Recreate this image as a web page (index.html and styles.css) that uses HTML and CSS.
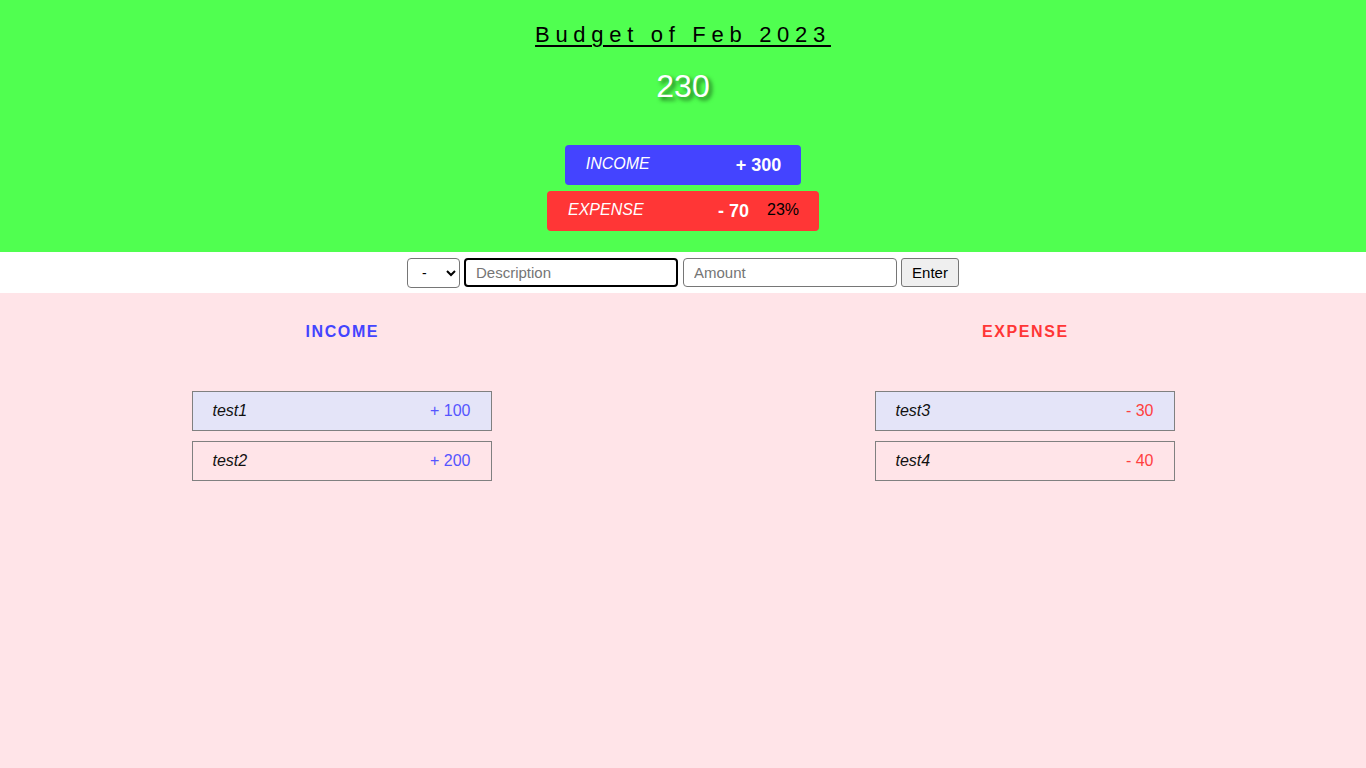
FILE: index.html
```html
<!DOCTYPE html>
<html>
<head>
<meta charset="utf-8">
<title>Budget</title>
<link rel="stylesheet" href="styles.css">
</head>
<body>
<header class="top">
  <h1 class="title">Budget of Feb 2023</h1>
  <div class="total">230</div>
  <div class="summary">
    <div class="sum sum-income">
      <span class="sum-label">INCOME</span>
      <span class="sum-value">+ 300</span>
    </div>
    <div class="sum sum-expense">
      <span class="sum-label">EXPENSE</span>
      <span class="sum-value">- 70</span>
      <span class="sum-pct">23%</span>
    </div>
  </div>
</header>
<form class="entry">
  <select class="type">
    <option>-</option>
    <option>+</option>
  </select>
  <input class="field focused" type="text" placeholder="Description">
  <input class="field amount" type="text" placeholder="Amount">
  <button class="enter" type="button">Enter</button>
</form>
<main class="lists">
  <section class="col">
    <h2 class="col-title income">INCOME</h2>
    <div class="item hl"><span class="item-name">test1</span><span class="item-val inc">+ 100</span></div>
    <div class="item"><span class="item-name">test2</span><span class="item-val inc">+ 200</span></div>
  </section>
  <section class="col">
    <h2 class="col-title expense">EXPENSE</h2>
    <div class="item hl"><span class="item-name">test3</span><span class="item-val exp">- 30</span></div>
    <div class="item"><span class="item-name">test4</span><span class="item-val exp">- 40</span></div>
  </section>
</main>
</body>
</html>
```
FILE: styles.css
```css
html, body {
  margin: 0;
  padding: 0;
  height: 100%;
}
body {
  font-family: "Liberation Sans", Arial, sans-serif;
  background: #ffe4e8;
  display: flex;
  flex-direction: column;
}
.top {
  background: #50ff50;
  height: 252px;
  display: flex;
  flex-direction: column;
  align-items: center;
  box-sizing: border-box;
  padding-top: 20px;
}
.title {
  margin: 0;
  font-size: 22px;
  font-weight: normal;
  letter-spacing: 5.7px;
  text-decoration: underline;
  text-underline-offset: 3px;
  text-decoration-thickness: 2px;
  line-height: 30px;
  color: #000;
}
.total {
  margin-top: 18px;
  font-size: 32px;
  line-height: 36px;
  color: #fff;
  text-shadow: 3px 3px 4px #1e6b1e;
}
.summary {
  margin-top: 41px;
  display: flex;
  flex-direction: column;
  align-items: center;
  gap: 6px;
}
.sum {
  display: flex;
  align-items: center;
  height: 40px;
  padding: 0 20px 0 21px;
  border-radius: 4px;
  color: #fff;
}
.sum-income { background: #4444ff; }
.sum-expense { background: #ff3636; padding-right: 20px; }
.sum-label {
  width: 150px;
  font-style: italic;
  font-size: 16px;
  margin-top: -3px;
}
.sum-value {
  font-size: 18px;
  font-weight: bold;
}
.sum-pct {
  margin-left: 18px;
  font-size: 16px;
  color: #000;
  margin-top: -2px;
}
.entry {
  background: #fff;
  height: 41px;
  display: flex;
  align-items: center;
  justify-content: center;
  gap: 4px;
}
.type {
  width: 53px;
  height: 30px;
  border: 1px solid #767676;
  border-radius: 4px;
  background: #fff;
  font-size: 14px;
  padding-left: 10px;
}
.field {
  width: 214px;
  height: 29px;
  box-sizing: border-box;
  border: 1px solid #767676;
  border-radius: 4px;
  padding: 0 10px;
  font-family: "Liberation Sans", Arial, sans-serif;
  font-size: 15px;
}
.amount { margin-left: 1px; }
.field::placeholder { color: #757575; }
.focused {
  border: 2px solid #000;
  padding: 0 10px 0 10px;
}
.enter {
  height: 29px;
  width: 58px;
  border: 1px solid #767676;
  border-radius: 3px;
  background: #efefef;
  font-family: "Liberation Sans", Arial, sans-serif;
  font-size: 15px;
  color: #000;
}
.lists {
  flex: 1;
  display: grid;
  grid-template-columns: 1fr 1fr;
  align-items: start;
}
.col {
  display: flex;
  flex-direction: column;
  align-items: center;
  padding-top: 23px;
}
.col-title {
  margin: 0 0 43px;
  font-size: 16px;
  letter-spacing: 0.1em;
  padding-left: 0.1em;
  line-height: 32px;
}
.income { color: #4444ff; }
.expense { color: #ff3636; }
.item {
  width: 300px;
  height: 40px;
  box-sizing: border-box;
  border: 1px solid #808080;
  display: flex;
  align-items: center;
  justify-content: space-between;
  padding: 0 20px;
  margin-bottom: 10px;
  font-size: 16px;
}
.item.hl { background: #e4e4f8; }
.item-name {
  font-style: italic;
  color: #111;
}
.inc { color: #5555ff; }
.exp { color: #ff4040; }
```
